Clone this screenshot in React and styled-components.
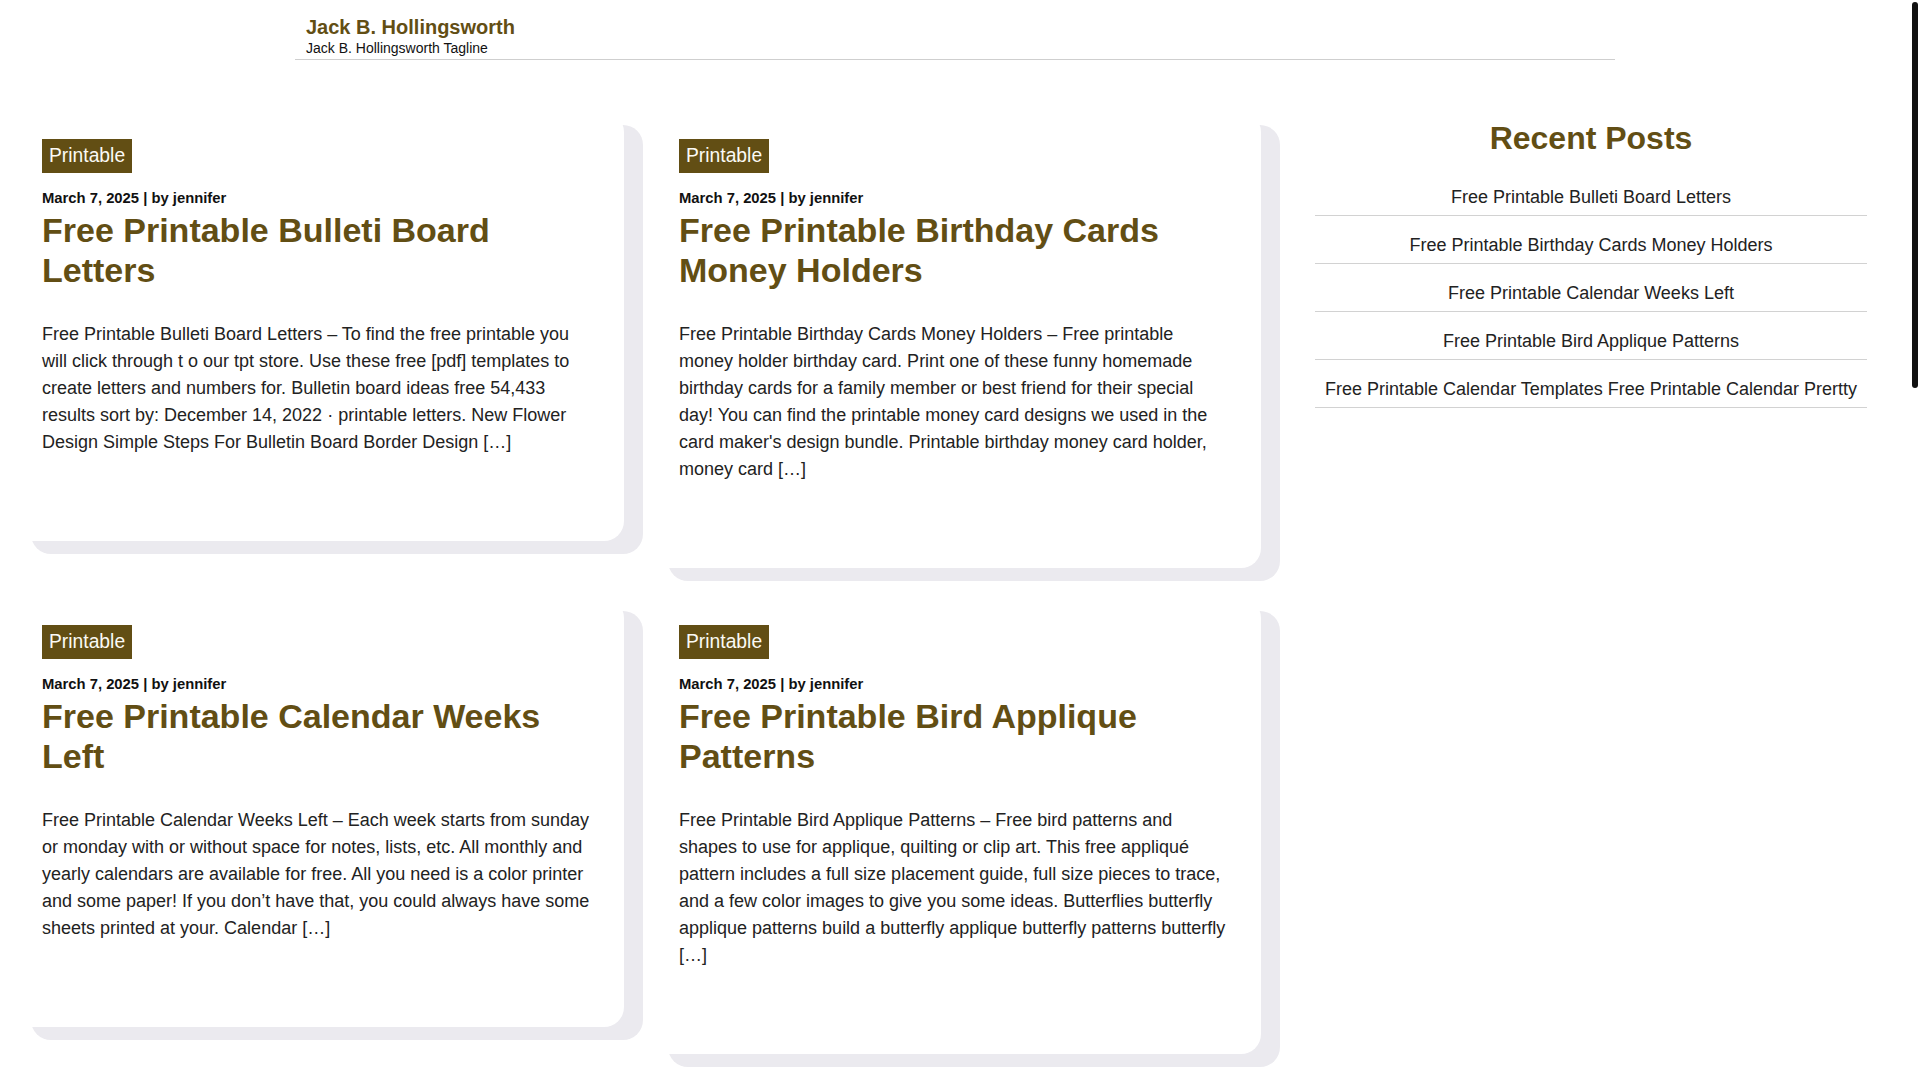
import React from "react";
import styled, { createGlobalStyle } from "styled-components";

const OLIVE = "#624e14";

const GlobalStyle = createGlobalStyle`
  html, body { margin: 0; padding: 0; background: #fff; }
  body {
    font-family: "Liberation Sans", Arial, Helvetica, sans-serif;
    color: #222;
  }
  * { box-sizing: border-box; }
`;

const Page = styled.div`
  padding-right: 15px;
  background: #fff;
  min-height: 1080px;
`;

const ScrollTrack = styled.div`
  position: fixed;
  top: 0;
  right: 0;
  width: 15px;
  height: 100vh;
  background: #fff;
  z-index: 10;
`;

const ScrollThumb = styled.div`
  position: absolute;
  top: 2px;
  left: 7px;
  width: 6px;
  height: 386px;
  background: #111;
  border-radius: 3px;
`;

const HeaderBar = styled.div`
  padding-left: 5px;
`;

const Header = styled.header`
  max-width: 1320px;
  margin: 0 auto;
  padding: 16px 11px 2px;
  border-bottom: 1px solid #cfcfcf;
`;

const SiteTitle = styled.a`
  display: block;
  font-size: 20px;
  line-height: 23px;
  font-weight: 700;
  color: ${OLIVE};
  text-decoration: none;
  margin-bottom: 1px;
`;

const Tagline = styled.div`
  font-size: 14px;
  line-height: 17px;
  color: #111;
`;

const Layout = styled.div`
  display: flex;
  align-items: flex-start;
  gap: 54px;
  padding: 52px 38px 0 12px;
`;

const PostGrid = styled.main`
  display: grid;
  grid-template-columns: repeat(2, 612px);
  column-gap: 25px;
  row-gap: 30px;
  align-items: start;
`;

const Card = styled.article`
  display: flex;
  flex-direction: column;
  align-items: flex-start;
  background: #fff;
  border-radius: 20px;
  box-shadow: 19px 13px 0 #ebeaef;
  padding: 27px 30px 85px;
`;

const Badge = styled.a`
  display: block;
  background: ${OLIVE};
  color: #fbfaf5;
  font-size: 19.3px;
  line-height: 24px;
  padding: 5px 7px;
  text-decoration: none;
`;

const Meta = styled.div`
  margin-top: 15px;
  font-size: 14.8px;
  line-height: 20px;
  font-weight: 700;
  color: #111;
`;

const PostTitle = styled.h2`
  margin: 2px 0 0;
  font-size: 34px;
  line-height: 40px;
  font-weight: 700;
  color: ${OLIVE};
`;

const Excerpt = styled.p`
  margin: 31px 0 0;
  font-size: 18px;
  line-height: 27px;
  color: #222;
`;

const Sidebar = styled.aside`
  width: 552px;
  flex-shrink: 0;
`;

const WidgetTitle = styled.h2`
  margin: 7px 0 11px;
  font-size: 32px;
  line-height: 38px;
  font-weight: 700;
  color: ${OLIVE};
  text-align: center;
`;

const RecentList = styled.ul`
  list-style: none;
  margin: 0;
  padding: 0;
`;

const RecentItem = styled.li`
  padding: 16px 0 5px;
  border-bottom: 1px solid #d2d2d2;
  text-align: center;
  font-size: 18px;
  line-height: 26px;
  color: #222;
`;

const posts = [
  {
    title: "Free Printable Bulleti Board Letters",
    excerpt:
      "Free Printable Bulleti Board Letters – To find the free printable you will click through t o our tpt store. Use these free [pdf] templates to create letters and numbers for. Bulletin board ideas free 54,433 results sort by: December 14, 2022 · printable letters. New Flower Design Simple Steps For Bulletin Board Border Design […]",
  },
  {
    title: "Free Printable Birthday Cards Money Holders",
    excerpt:
      "Free Printable Birthday Cards Money Holders – Free printable money holder birthday card. Print one of these funny homemade birthday cards for a family member or best friend for their special day! You can find the printable money card designs we used in the card maker's design bundle. Printable birthday money card holder, money card […]",
  },
  {
    title: "Free Printable Calendar Weeks Left",
    excerpt:
      "Free Printable Calendar Weeks Left – Each week starts from sunday or monday with or without space for notes, lists, etc. All monthly and yearly calendars are available for free. All you need is a color printer and some paper! If you don’t have that, you could always have some sheets printed at your. Calendar […]",
  },
  {
    title: "Free Printable Bird Applique Patterns",
    excerpt:
      "Free Printable Bird Applique Patterns – Free bird patterns and shapes to use for applique, quilting or clip art. This free appliqué pattern includes a full size placement guide, full size pieces to trace, and a few color images to give you some ideas. Butterflies butterfly applique patterns build a butterfly applique butterfly patterns butterfly […]",
  },
];

const recent = [
  "Free Printable Bulleti Board Letters",
  "Free Printable Birthday Cards Money Holders",
  "Free Printable Calendar Weeks Left",
  "Free Printable Bird Applique Patterns",
  "Free Printable Calendar Templates Free Printable Calendar Prertty",
];

function PostCard({ post }) {
  return (
    <Card>
      <Badge href="#">Printable</Badge>
      <Meta>March 7, 2025 | by jennifer</Meta>
      <PostTitle>{post.title}</PostTitle>
      <Excerpt>{post.excerpt}</Excerpt>
    </Card>
  );
}

export default function App() {
  return (
    <Page>
      <GlobalStyle />
      <HeaderBar>
        <Header>
          <SiteTitle href="#">Jack B. Hollingsworth</SiteTitle>
          <Tagline>Jack B. Hollingsworth Tagline</Tagline>
        </Header>
      </HeaderBar>
      <Layout>
        <PostGrid>
          {posts.map((p) => (
            <PostCard key={p.title} post={p} />
          ))}
        </PostGrid>
        <Sidebar>
          <WidgetTitle>Recent Posts</WidgetTitle>
          <RecentList>
            {recent.map((r) => (
              <RecentItem key={r}>{r}</RecentItem>
            ))}
          </RecentList>
        </Sidebar>
      </Layout>
      <ScrollTrack aria-hidden="true">
        <ScrollThumb />
      </ScrollTrack>
    </Page>
  );
}
